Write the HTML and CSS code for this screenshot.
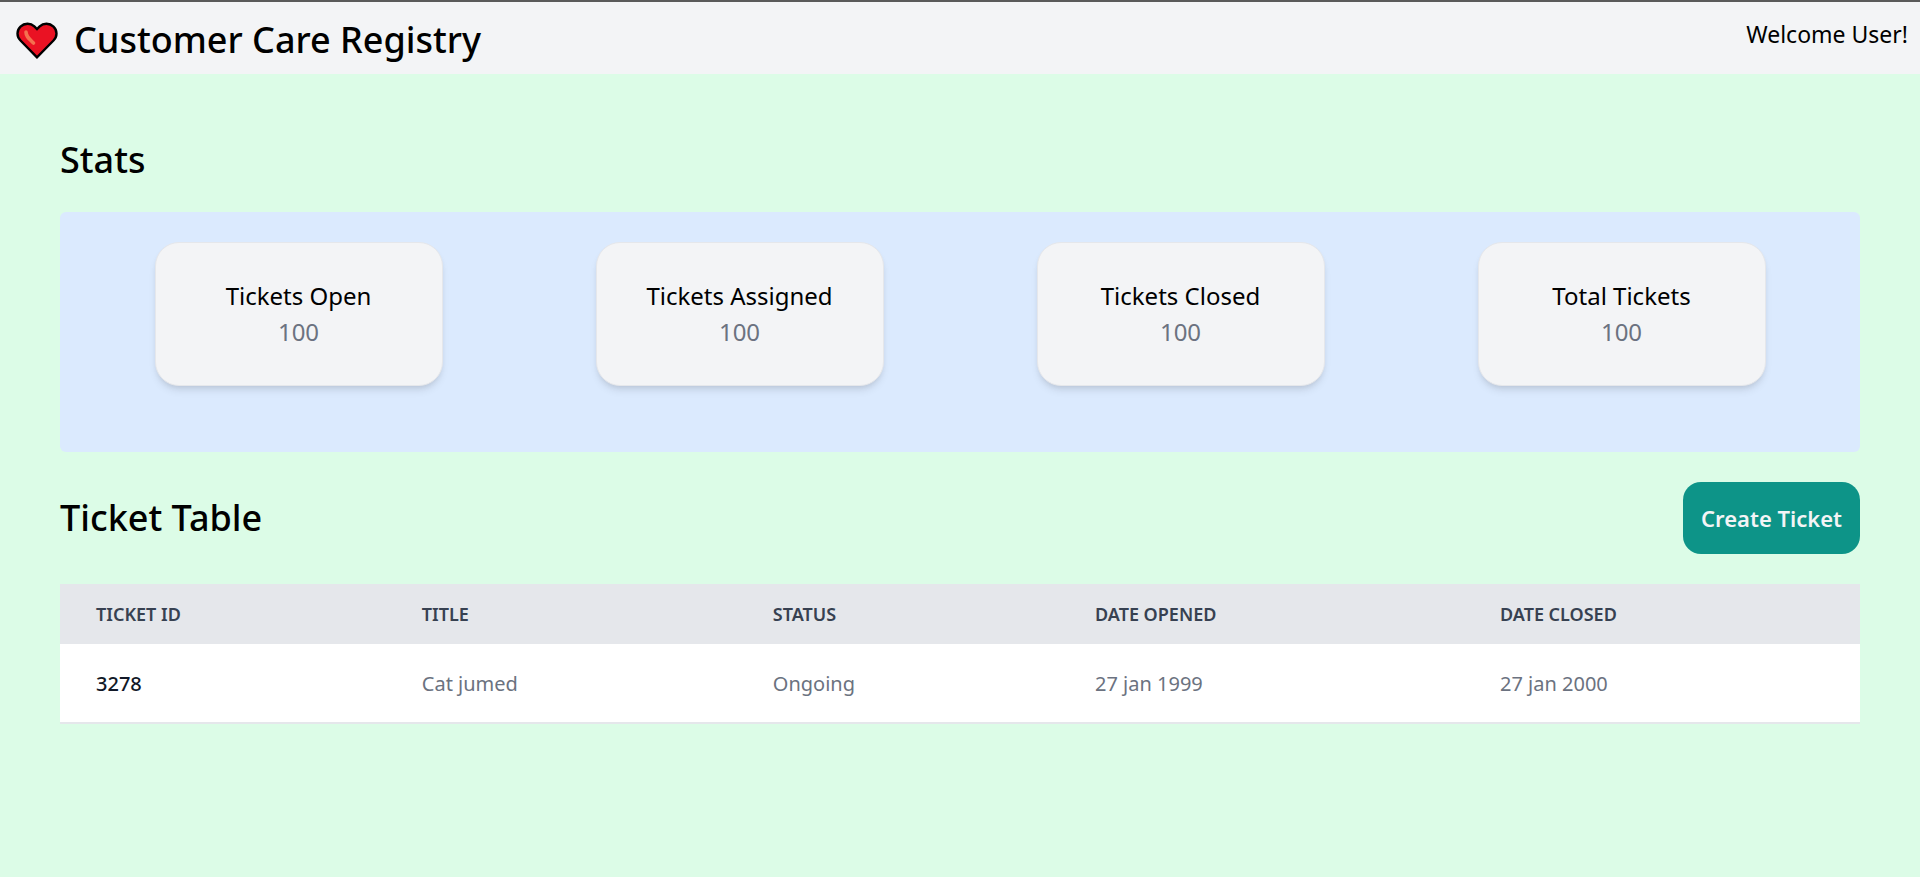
FILE: index.html
```html
<!DOCTYPE html>
<html lang="en">
<head>
<meta charset="utf-8">
<meta name="viewport" content="width=device-width, initial-scale=1">
<title>Customer Care Registry</title>
<link rel="stylesheet" href="styles.css">
</head>
<body>
<header class="topbar">
  <div class="brand">
    <svg class="brand-icon" viewBox="0 0 42 38" aria-hidden="true">
      <path d="M21 36.300 4.500 19.500C.500 15.500.500 9.500 4.500 5.600 8.500 1.800 14.500 1.800 18.300 5.400L21 8.100l2.700-2.700C27.500 1.800 33.500 1.800 37.500 5.600c4 3.900 4 9.900 0 13.900Z" fill="#ea1223" stroke="#000" stroke-width="2.400"/>
      <path d="M10 11c0 4.500 3 6.500 7.500 11" fill="none" stroke="#f4704f" stroke-width="3.600" stroke-linecap="round"/>
    </svg>
    <h1 class="heading">Customer Care Registry</h1>
  </div>
  <p class="welcome">Welcome User!</p>
</header>
<main class="content">
  <section>
    <h2 class="heading">Stats</h2>
    <div class="stats">
      <article class="card"><h3 class="card-title">Tickets Open</h3><p class="card-value">100</p></article>
      <article class="card"><h3 class="card-title">Tickets Assigned</h3><p class="card-value">100</p></article>
      <article class="card"><h3 class="card-title">Tickets Closed</h3><p class="card-value">100</p></article>
      <article class="card"><h3 class="card-title">Total Tickets</h3><p class="card-value">100</p></article>
    </div>
  </section>
  <section>
    <div class="table-bar">
      <h2 class="heading">Ticket Table</h2>
      <button class="create" type="button">Create Ticket</button>
    </div>
    <table class="tickets">
      <colgroup><col class="col-id"><col class="col-title"><col class="col-status"><col class="col-opened"><col></colgroup>
      <thead>
        <tr><th scope="col">Ticket ID</th><th scope="col">Title</th><th scope="col">Status</th><th scope="col">Date Opened</th><th scope="col">Date Closed</th></tr>
      </thead>
      <tbody>
        <tr><th scope="row">3278</th><td>Cat jumed</td><td>Ongoing</td><td>27 jan 1999</td><td>27 jan 2000</td></tr>
      </tbody>
    </table>
  </section>
</main>
</body>
</html>
```
FILE: styles.css
```css
* {
  box-sizing: border-box;
}

body {
  margin: 0;
  min-height: 100vh;
  background: #dcfce7;
  color: #000;
  font-family: "Segoe UI", "Noto Sans", "Open Sans", sans-serif;
  font-size: 24px;
  line-height: 36px;
}

h1, h2, h3, p {
  margin: 0;
  font-weight: 400;
}

.heading {
  font-size: 36px;
  font-weight: 500;
  line-height: 48px;
}

.topbar {
  display: flex;
  justify-content: space-between;
  align-items: flex-start;
  padding: 14px 12px 10px 16px;
  border-top: 2px solid #5a5a5a;
  background: #f3f4f6;
}

.brand {
  display: flex;
  align-items: center;
  gap: 16px;
}

.brand-icon {
  width: 42px;
  height: 38px;
}

.welcome {
  font-size: 23px;
}

.content {
  padding: 62px 60px;
}

.stats {
  display: flex;
  justify-content: space-around;
  align-items: flex-start;
  min-height: 240px;
  margin-top: 28px;
  padding: 30px 18px;
  border-radius: 6px;
  background: #dbeafe;
}

.card {
  width: 288px;
  padding: 35px 24px;
  border: 1px solid #e5e7eb;
  border-radius: 24px;
  background: #f3f4f6;
  box-shadow: 0 6px 9px -2px rgb(0 0 0 / 10%), 0 3px 6px -3px rgb(0 0 0 / 10%);
  text-align: center;
}

.card-title,
.card-value {
  font-size: 24px;
}

.card-value {
  color: #6b7280;
}

.table-bar {
  display: flex;
  justify-content: space-between;
  align-items: center;
  padding: 30px 0;
}

.create {
  padding: 18px;
  border: 0;
  border-radius: 18px;
  background: #0d9488;
  color: #f3f4f6;
  font: 600 22px/36px "Segoe UI", "Noto Sans", "Open Sans", sans-serif;
}

.tickets {
  width: 100%;
  border-collapse: separate;
  border-spacing: 0;
  table-layout: fixed;
  text-align: left;
}

.col-id {
  width: 18.1%;
}

.col-title {
  width: 19.5%;
}

.col-status {
  width: 17.9%;
}

.col-opened {
  width: 22.5%;
}

.tickets th,
.tickets td {
  padding: 25px 36px 23px;
  font-size: 20px;
  line-height: 30px;
}

.tickets thead th {
  padding-block: 15px;
  background: #e5e7eb;
  color: #374151;
  font-size: 18px;
  font-weight: 600;
  text-transform: uppercase;
}

.tickets tbody th,
.tickets tbody td {
  border-bottom: 2px solid #e5e7eb;
  background: #fff;
  color: #6b7280;
}

.tickets tbody th {
  color: #111827;
  font-weight: 500;
}
```
